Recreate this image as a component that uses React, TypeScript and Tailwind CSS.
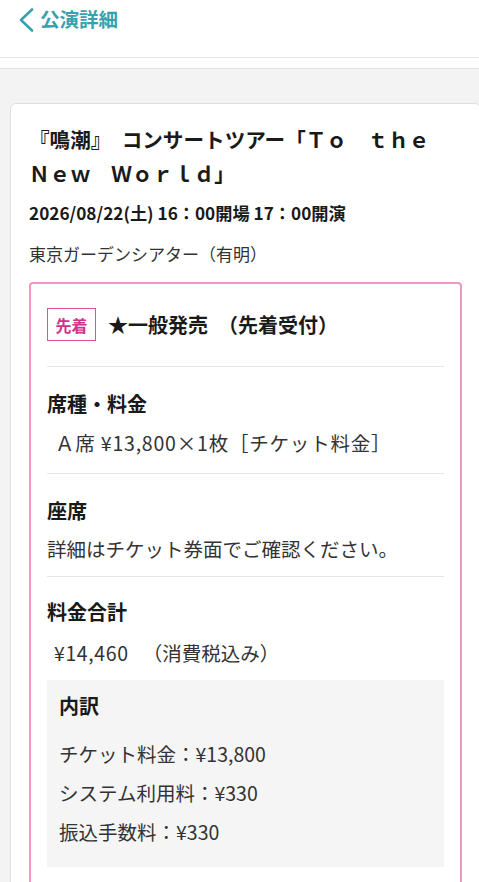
export default function App() {
  const font = { fontFamily: '"Noto Sans CJK JP", "Noto Sans", sans-serif' };

  return (
    <div className="w-[479px] min-h-[882px] overflow-hidden bg-[#f3f3f3] text-[#222]" style={font}>
      {/* Header */}
      <div className="h-[58px] bg-white border-b border-[#e6e6e6] flex items-center pl-[18px] pb-[18px]">
        <svg width="17" height="24" viewBox="0 0 17 24" className="mr-[5px]">
          <polyline points="14,1.5 3,12 14,22.5" fill="none" stroke="#35a2ad" strokeWidth="2.6" strokeLinecap="round" strokeLinejoin="round" />
        </svg>
        <span className="text-[19.5px] font-bold text-[#35a2ad] leading-none -mt-[2px]">公演詳細</span>
      </div>
      <div className="h-[10px] bg-white"></div>

      {/* Content */}
      <div className="border-t border-[#e2e2e2] pt-[34px] pl-[10px]">
        <div className="w-[471px] bg-white border border-[#dedede] rounded-[6px] px-[18px] pt-[18px] pb-[40px]">
          <h1 className="text-[20.6px] font-bold leading-[34px] text-[#1a1a1a]">
            『鳴潮』　コンサートツアー「Ｔｏ　ｔｈｅ
            <br />
            Ｎｅｗ　Ｗｏｒｌｄ」
          </h1>
          <p className="mt-[9px] text-[17.2px] font-bold leading-[28px] text-[#1a1a1a]">
            2026/08/22(土) 16：00開場 17：00開演
          </p>
          <p className="mt-[13px] text-[17px] leading-[28px] text-[#333]">東京ガーデンシアター（有明）</p>

          {/* Ticket box */}
          <div className="mt-[14px] border-2 border-[#ee98c5] rounded-[4px] px-[16px] pt-[24px] pb-[30px]">
            <div className="flex items-center gap-[12px] pb-[25px] border-b border-[#e6e6e6]">
              <span className="h-[33px] px-[7.5px] flex items-center border-[1.5px] border-[#d9529b] text-[#d4318a] text-[16px] font-bold leading-none">
                先着
              </span>
              <span className="text-[20px] font-bold text-[#1a1a1a]">★一般発売　（先着受付）</span>
            </div>

            <div className="pt-[22px] pb-[15px] border-b border-[#e6e6e6]">
              <p className="text-[20px] font-bold leading-[30px] text-[#1a1a1a]">席種・料金</p>
              <p className="mt-[9px] ml-[8px] text-[19.5px] leading-[30px] tracking-[0.8px] text-[#333]">Ａ席 ¥13,800×1枚［チケット料金］</p>
            </div>

            <div className="pt-[22px] pb-[12px] border-b border-[#e6e6e6]">
              <p className="text-[20px] font-bold leading-[30px] text-[#1a1a1a]">座席</p>
              <p className="mt-[8px] text-[19.5px] leading-[30px] text-[#333]">詳細はチケット券面でご確認ください。</p>
            </div>

            <div className="pt-[20px]">
              <p className="text-[20px] font-bold leading-[30px] text-[#1a1a1a]">料金合計</p>
              <p className="mt-[11px] ml-[7px] text-[19.5px] leading-[30px] text-[#333]">
                <span className="tracking-[0.6px]">¥14,460</span> 　（消費税込み）
              </p>

              <div className="mt-[12px] bg-[#f5f5f5] pl-[12px] pt-[11px] pb-[20px]">
                <p className="text-[20px] font-bold leading-[30px] text-[#1a1a1a]">内訳</p>
                <div className="mt-[18px] flex flex-col gap-[9px] text-[19.5px] leading-[30px] text-[#333]">
                  <p>チケット料金：¥13,800</p>
                  <p>システム利用料：¥330</p>
                  <p>振込手数料：¥330</p>
                </div>
              </div>
            </div>
          </div>
        </div>
      </div>
    </div>
  );
}
